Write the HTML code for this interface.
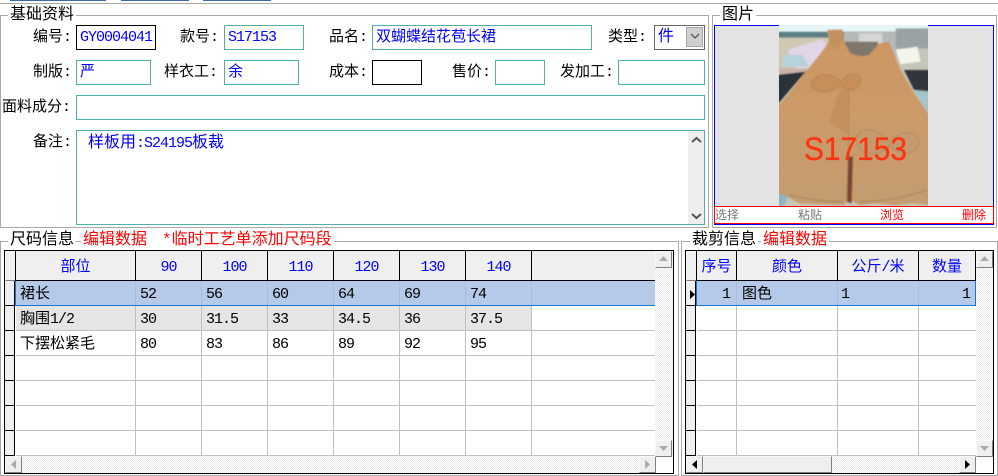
<!DOCTYPE html>
<html lang="zh">
<head>
<meta charset="utf-8">
<title>基础资料</title>
<style>
html,body{margin:0;padding:0;background:#fff}
body{width:998px;height:476px;position:relative;overflow:hidden;font-family:"Liberation Mono","WenQuanYi Zen Hei","Noto Sans CJK SC",monospace;font-size:15px;color:#000}
div{position:absolute;box-sizing:border-box}
.n{font-size:15px;letter-spacing:-1px}
.t{white-space:nowrap;line-height:18px;height:18px}
.g{border:1px solid #a9a9a9}
.lg{background:#fff;padding:0 2px;font-size:16px;line-height:16px;height:16px;white-space:nowrap}
.r{color:#f00}
.b{color:#00f}
.i{border:1px solid #4fb0ac;height:25px;background:#fff;color:#00f;padding-left:3px;line-height:23px;white-space:nowrap;font-size:15px}
.k{border-color:#000}
.grid{border:1px solid #000;background:#fff;overflow:hidden}
.hd{background:#efefef;text-align:center;color:#00f;height:30px;top:0;line-height:33px;border-right:1px solid #000;border-bottom:1px solid #000;font-size:15px;white-space:nowrap}
.rh{background:#efefef;left:0;width:10px;height:25px;border-bottom:1px solid #000;border-right:1px solid #000}
.v{background:#c0c0c0;width:1px;top:30px}
.h{background:#c0c0c0;height:1px}
.c{line-height:18px;height:18px;white-space:nowrap;font-size:15px}
.chk{background:repeating-conic-gradient(#e9e9e9 0 25%,#fff 0 50%) 0 0/2px 2px}
.btn{background:#efefef;border:1px solid;border-color:#f8f8f8 #808080 #808080 #f8f8f8;width:17px;height:17px}
.pic{top:208px;font-size:12px;line-height:16px;height:16px}
svg{position:absolute;display:block}
</style>
</head>
<body>
<div style="left:0;top:3px;width:998px;height:1px;background:#a9a9a9"></div>
<div style="left:10px;top:0;width:96px;height:1px;background:#3f66b0"></div>
<div style="left:121px;top:0;width:68px;height:1px;background:#3f66b0"></div>
<div style="left:203px;top:0;width:68px;height:1px;background:#3f66b0"></div>

<!-- group 1 -->
<div class="g" style="left:0;top:15px;width:709px;height:213px"></div>
<div class="lg" style="left:8px;top:7px">基础资料</div>
<div class="t" style="left:33px;top:29px">编号:</div>
<div class="i k n" style="left:76px;top:25px;width:80px">GY0004041</div>
<div class="t" style="left:180px;top:29px">款号:</div>
<div class="i n" style="left:224px;top:25px;width:80px">S17153</div>
<div class="t" style="left:329px;top:29px">品名:</div>
<div class="i" style="left:372px;top:25px;width:220px">双蝴蝶结花苞长裙</div>
<div class="t" style="left:608px;top:29px">类型:</div>
<div class="i" style="left:654px;top:25px;width:51px;border-color:#666;padding-left:3px;font-size:16px">件</div>
<div style="left:686px;top:27px;width:17px;height:20px;background:#d0d0d0;border:1px solid #a8a8a8"></div>
<svg style="left:690px;top:33px" width="10" height="7"><path d="M1 1l4 4 4-4" fill="none" stroke="#555" stroke-width="1.3"/></svg>

<div class="t" style="left:33px;top:64px">制版:</div>
<div class="i" style="left:76px;top:60px;width:75px">严</div>
<div class="t" style="left:164px;top:64px">样衣工:</div>
<div class="i" style="left:224px;top:60px;width:75px">余</div>
<div class="t" style="left:329px;top:64px">成本:</div>
<div class="i k" style="left:372px;top:60px;width:50px"></div>
<div class="t" style="left:452px;top:64px">售价:</div>
<div class="i" style="left:495px;top:60px;width:50px"></div>
<div class="t" style="left:560px;top:64px">发加工:</div>
<div class="i" style="left:618px;top:60px;width:87px"></div>

<div class="t" style="left:2px;top:99px">面料成分:</div>
<div class="i" style="left:76px;top:95px;width:629px"></div>

<div class="t" style="left:33px;top:134px">备注:</div>
<div class="i" style="left:76px;top:130px;width:629px;height:95px"></div>
<div class="t b" style="left:88px;top:134px;font-size:16px">样板用<span class="n">:S24195</span>板裁</div>
<div style="left:688px;top:131px;width:16px;height:93px;background:#eee"></div>
<svg style="left:691px;top:136px" width="11" height="8"><path d="M1 6l4.500-4 4.500 4" fill="none" stroke="#555" stroke-width="2"/></svg>
<svg style="left:691px;top:212px" width="11" height="8"><path d="M1 2l4.500 4 4.500-4" fill="none" stroke="#555" stroke-width="2"/></svg>

<!-- group 2 -->
<div class="g" style="left:712px;top:15px;width:285px;height:213px"></div>
<div class="lg" style="left:720px;top:7px">图片</div>
<div style="left:714px;top:25px;width:280px;height:200px;background:#e3e3e3;border:1px solid #00f"></div>
<svg style="left:779px;top:25px" width="149" height="181" viewBox="0 0 447 543">
<defs><filter id="bl" x="-5%" y="-5%" width="110%" height="110%"><feGaussianBlur stdDeviation="2.500"/></filter>
<linearGradient id="dr" x1="0" y1="0" x2="0" y2="1"><stop offset="0" stop-color="#cc9660"/><stop offset=".45" stop-color="#cb9a68"/><stop offset="1" stop-color="#c49c70"/></linearGradient></defs>
<rect width="447" height="543" fill="#c6c6b8"/>
<g filter="url(#bl)">
<rect x="-10" y="-10" width="470" height="30" fill="#e4f6f8"/>
<rect x="-10" y="20" width="470" height="18" fill="#5c7f82"/>
<rect x="-10" y="38" width="170" height="104" fill="#cfc7b4"/>
<path d="M25 75L130 42L150 70L125 130L50 130Z" fill="#e0d6e6"/>
<path d="M10 90H70L90 125H10Z" fill="#b8d2dc"/>
<rect x="-10" y="130" width="130" height="18" fill="#cdb3ad"/>
<path d="M-10 150L80 140L-10 245Z" fill="#2c3238"/>
<rect x="195" y="20" width="160" height="70" fill="#b5b9b7"/>
<rect x="240" y="25" width="70" height="50" fill="#d6d7d5"/>
<rect x="350" y="10" width="100" height="60" fill="#9aa3a4"/>
<path d="M350 75L415 65L425 110L365 118Z" fill="#f4f4ec"/>
<path d="M375 135H460V205L405 195Z" fill="#30343a"/>
<path d="M405 195L460 200V290Z" fill="#a2c6ca"/>
<rect x="197" y="50" width="100" height="50" fill="#7d786b"/>
<path d="M145 15L190 13L197 55L215 85Q245 98 270 90L300 55L330 50L342 80L365 135L400 195L460 285V540L400 535L350 540L290 535L240 540L215 525L195 540L130 538L60 535L25 515L-10 505V250L30 205L80 140L125 85L150 50Z" fill="url(#dr)"/>
<path d="M145 15L190 13L195 50L165 75L150 50Z" fill="#c1925f"/>
<path d="M-10 505L28 515L10 550H-10Z" fill="#8fb6c0"/>
<path d="M209 195V400" stroke="#a5774c" stroke-width="2" fill="none"/>
<path d="M207 395L204 530L218 535L222 395Z" fill="#7a4530"/>
<path d="M185 190L208 195L208 330L150 290Z" fill="#c4905c"/>
<path d="M185 170C150 135 100 150 97 178C100 205 150 210 185 180C205 205 245 195 245 165C240 135 205 145 185 170Z" fill="#c68f5a" stroke="#a67a4e" stroke-width="2"/>
<path d="M330 350C290 300 235 305 232 345C235 385 295 405 330 360C365 400 420 390 420 350C415 310 365 315 330 350Z" fill="#c49a6e" stroke="#a5825c" stroke-width="2"/>
<path d="M30 510Q110 530 190 530M240 530Q340 530 445 495" stroke="#a58058" stroke-width="3" fill="none"/>
</g>
</svg>
<svg style="left:779px;top:125px" width="149" height="50"><text x="25" y="35" font-family="Liberation Sans" font-size="32" fill="#fb3512" stroke="#fb3512" stroke-width=".3" textLength="103" lengthAdjust="spacingAndGlyphs">S17153</text></svg>
<div style="left:714px;top:206px;width:280px;height:18px;background:#fff;border:1px solid #f00"></div>
<div class="t pic" style="left:715px;color:#777">选择</div>
<div class="t pic" style="left:798px;color:#777">粘贴</div>
<div class="t r pic" style="left:880px">浏览</div>
<div class="t r pic" style="left:962px">删除</div>

<!-- group 3 -->
<div class="g" style="left:0;top:241px;width:679px;height:235px"></div>
<div class="lg" style="left:8px;top:232px">尺码信息</div>
<div class="lg r" style="left:81px;top:232px">编辑数据</div>
<div class="lg r" style="left:147px;top:232px;padding-left:15px">*临时工艺单添加尺码段</div>

<div class="grid" style="left:4px;top:250px;width:670px;height:224px">
  <div style="left:0;top:0;width:11px;height:30px;background:#efefef;border:1px solid;border-color:#f8f8f8 #808080 #808080 #f8f8f8"></div>
  <div class="rh" style="top:30px"></div><div class="rh" style="top:55px"></div><div class="rh" style="top:80px"></div><div class="rh" style="top:105px"></div><div class="rh" style="top:130px"></div><div class="rh" style="top:155px"></div><div class="rh" style="top:180px"></div>
  <div class="hd" style="left:10px;width:121px;border-left:1px solid #000">部位</div>
  <div class="hd n" style="left:131px;width:66px">90</div>
  <div class="hd n" style="left:197px;width:66px">100</div>
  <div class="hd n" style="left:263px;width:66px">110</div>
  <div class="hd n" style="left:329px;width:66px">120</div>
  <div class="hd n" style="left:395px;width:66px">130</div>
  <div class="hd n" style="left:461px;width:66px">140</div>
  <div style="left:527px;top:0;width:124px;height:30px;background:#efefef;border-bottom:1px solid #000"></div>

  <div style="left:11px;top:55px;width:516px;height:25px;background:#e5e5e5"></div>
  <div class="h" style="left:11px;top:79px;width:640px"></div>
  <div class="h" style="left:11px;top:104px;width:640px"></div>
  <div class="h" style="left:11px;top:129px;width:640px"></div>
  <div class="h" style="left:11px;top:154px;width:640px"></div>
  <div class="h" style="left:11px;top:179px;width:640px"></div>
  <div class="h" style="left:11px;top:204px;width:640px"></div>
  <div class="v" style="left:130px;height:175px"></div>
  <div class="v" style="left:196px;height:175px"></div>
  <div class="v" style="left:262px;height:175px"></div>
  <div class="v" style="left:328px;height:175px"></div>
  <div class="v" style="left:394px;height:175px"></div>
  <div class="v" style="left:460px;height:175px"></div>
  <div class="v" style="left:526px;height:175px"></div>
  <div style="left:10px;top:30px;width:641px;height:25px;background:#b5cae8;border:1px solid #0f78d8;border-top:0"></div>
  <div class="v" style="left:130px;height:24px;background:#a9bcd8"></div>
  <div class="v" style="left:196px;height:24px;background:#a9bcd8"></div>
  <div class="v" style="left:262px;height:24px;background:#a9bcd8"></div>
  <div class="v" style="left:328px;height:24px;background:#a9bcd8"></div>
  <div class="v" style="left:394px;height:24px;background:#a9bcd8"></div>
  <div class="v" style="left:460px;height:24px;background:#a9bcd8"></div>
  <div class="v" style="left:526px;height:24px;background:#a9bcd8"></div>

  <div class="c" style="left:15px;top:35px">裙长</div>
  <div class="c n" style="left:135px;top:35px">52</div><div class="c n" style="left:201px;top:35px">56</div><div class="c n" style="left:267px;top:35px">60</div><div class="c n" style="left:333px;top:35px">64</div><div class="c n" style="left:399px;top:35px">69</div><div class="c n" style="left:465px;top:35px">74</div>
  <div class="c" style="left:15px;top:60px">胸围<span class="n">1/2</span></div>
  <div class="c n" style="left:135px;top:60px">30</div><div class="c n" style="left:201px;top:60px">31.5</div><div class="c n" style="left:267px;top:60px">33</div><div class="c n" style="left:333px;top:60px">34.5</div><div class="c n" style="left:399px;top:60px">36</div><div class="c n" style="left:465px;top:60px">37.5</div>
  <div class="c" style="left:15px;top:85px">下摆松紧毛</div>
  <div class="c n" style="left:135px;top:85px">80</div><div class="c n" style="left:201px;top:85px">83</div><div class="c n" style="left:267px;top:85px">86</div><div class="c n" style="left:333px;top:85px">89</div><div class="c n" style="left:399px;top:85px">92</div><div class="c n" style="left:465px;top:85px">95</div>

  <div class="chk" style="left:650px;top:0;width:18px;height:205px"></div>
  <div class="chk" style="left:0;top:205px;width:651px;height:17px"></div>
  <div class="btn" style="left:650px;top:0"></div>
  <svg style="left:654px;top:5px" width="9" height="6"><path d="M4.500 0L9 5H0Z" fill="#aaa"/></svg>
  <div class="btn" style="left:650px;top:189px"></div>
  <svg style="left:654px;top:195px" width="9" height="6"><path d="M4.500 5L9 0H0Z" fill="#aaa"/></svg>
  <div class="btn" style="left:0;top:205px"></div>
  <svg style="left:6px;top:209px" width="6" height="9"><path d="M0 4.500L5 0V9Z" fill="#aaa"/></svg>
  <div class="btn" style="left:634px;top:205px"></div>
  <svg style="left:640px;top:209px" width="6" height="9"><path d="M5 4.500L0 0V9Z" fill="#aaa"/></svg>
</div>

<!-- group 4 -->
<div class="g" style="left:681px;top:241px;width:317px;height:235px"></div>
<div class="lg" style="left:690px;top:232px">裁剪信息</div>
<div class="lg r" style="left:761px;top:232px">编辑数据</div>

<div class="grid" style="left:685px;top:250px;width:309px;height:224px">
  <div style="left:0;top:0;width:11px;height:30px;background:#efefef;border:1px solid;border-color:#f8f8f8 #808080 #808080 #f8f8f8"></div>
  <div class="rh" style="top:30px"></div><div class="rh" style="top:55px"></div><div class="rh" style="top:80px"></div><div class="rh" style="top:105px"></div><div class="rh" style="top:130px"></div><div class="rh" style="top:155px"></div><div class="rh" style="top:180px"></div>
  <svg style="left:4px;top:39px" width="6" height="9"><path d="M0 0L5 4.500L0 9Z" fill="#000"/></svg>
  <div class="hd" style="left:10px;width:41px;border-left:1px solid #000">序号</div>
  <div class="hd" style="left:51px;width:101px">颜色</div>
  <div class="hd" style="left:152px;width:81px">公斤<span class="n">/</span>米</div>
  <div class="hd" style="left:233px;width:57px">数量</div>

  <div class="h" style="left:11px;top:79px;width:279px"></div>
  <div class="h" style="left:11px;top:104px;width:279px"></div>
  <div class="h" style="left:11px;top:129px;width:279px"></div>
  <div class="h" style="left:11px;top:154px;width:279px"></div>
  <div class="h" style="left:11px;top:179px;width:279px"></div>
  <div class="h" style="left:11px;top:204px;width:279px"></div>
  <div class="v" style="left:50px;height:175px"></div>
  <div class="v" style="left:151px;height:175px"></div>
  <div class="v" style="left:232px;height:175px"></div>
  <div style="left:10px;top:30px;width:280px;height:25px;background:#b5cae8;border:1px solid #0f78d8;border-top:0"></div>
  <div class="v" style="left:50px;height:24px;background:#a9bcd8"></div>
  <div class="v" style="left:151px;height:24px;background:#a9bcd8"></div>
  <div class="v" style="left:232px;height:24px;background:#a9bcd8"></div>
  <div class="c n" style="left:36px;top:35px">1</div>
  <div class="c" style="left:56px;top:35px">图色</div>
  <div class="c n" style="left:155px;top:35px">1</div>
  <div class="c n" style="left:276px;top:35px">1</div>

  <div class="chk" style="left:290px;top:0;width:17px;height:205px"></div>
  <div class="chk" style="left:0;top:205px;width:290px;height:17px"></div>
  <div class="btn" style="left:290px;top:0"></div>
  <svg style="left:294px;top:5px" width="9" height="6"><path d="M4.500 0L9 5H0Z" fill="#aaa"/></svg>
  <div class="btn" style="left:290px;top:189px"></div>
  <svg style="left:294px;top:195px" width="9" height="6"><path d="M4.500 5L9 0H0Z" fill="#aaa"/></svg>
  <div class="btn" style="left:0;top:205px"></div>
  <svg style="left:6px;top:209px" width="6" height="9"><path d="M0 4.500L5 0V9Z" fill="#000"/></svg>
  <div class="btn" style="left:17px;top:205px;width:129px"></div>
  <div class="btn" style="left:273px;top:205px"></div>
  <svg style="left:279px;top:209px" width="6" height="9"><path d="M5 4.500L0 0V9Z" fill="#000"/></svg>
</div>
</body>
</html>
